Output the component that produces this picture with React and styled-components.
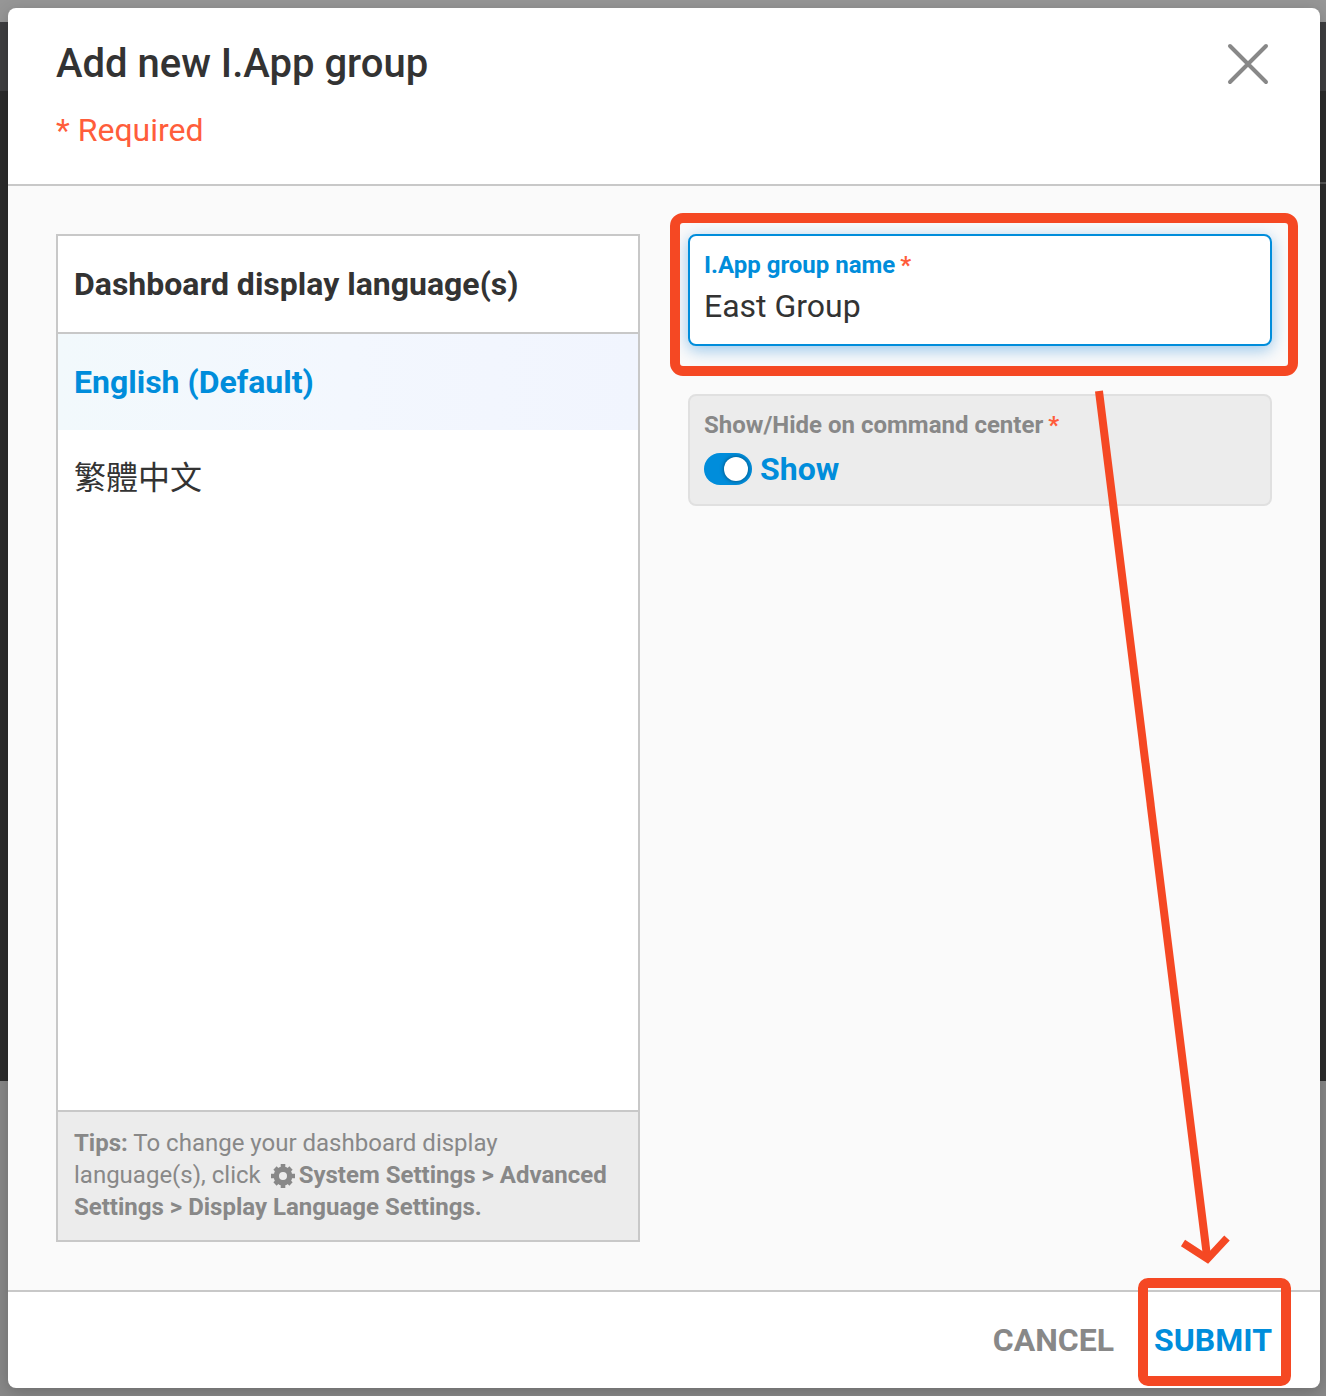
import React, { useState } from 'react'
import styled, { createGlobalStyle } from 'styled-components';

const GlobalStyle = createGlobalStyle`
  * {
    box-sizing: border-box;
  }

  body {
    margin: 0;
    font-family: Roboto, "Noto Sans CJK TC", sans-serif;
    font-size: 32px;
    color: #333;
  }

  button, input {
    font-family: inherit;
    font-size: inherit;
    border: none;
    padding: 0;
    background: none;
    outline: none;
  }
`;

const languages = [
  { id: "en", label: "English (Default)" },
  { id: "zh", label: "繁體中文" },
];

const CloseIcon = () => (
  <svg width="42" height="42" viewBox="0 0 42 42" fill="none" stroke="#888" strokeWidth="4" strokeLinecap="round">
    <path d="M3 3 39 39M39 3 3 39" />
  </svg>
)

const GearIcon = () => (
  <svg width="24" height="24" viewBox="0 0 24 24" fill="none" stroke="#888">
    <circle cx="12" cy="12" r="6.700" strokeWidth="5.400" />
    <path d="M12 0v6M12 18v6M0 12h6M18 12h6M4 4l4 4M16 16l4 4M20 4l-4 4M8 16l-4 4" strokeWidth="4.600" />
  </svg>
)

const App = () => {
  const [language, setLanguage] = useState("en");
  const [name, setName] = useState("East Group");
  const [show, setShow] = useState(true);

  return (
    <Page>
      <GlobalStyle />
      <Modal>
        <Header>
          <div>
            <h1>Add new I.App group</h1>
            <p>* Required</p>
          </div>
          <button type="button" aria-label="Close"><CloseIcon /></button>
        </Header>

        <Body>
          <LanguagePanel>
            <h2>Dashboard display language(s)</h2>
            <LanguageList>
              {
                languages.map((curElem) => {
                  return <LanguageItem key={curElem.id} $active={curElem.id === language} onClick={() => setLanguage(curElem.id)}>{curElem.label}</LanguageItem>
                })
              }
            </LanguageList>
            <Tips>
              <b>Tips:</b> To change your dashboard display language(s), click <GearIcon /><b>System Settings &gt; Advanced Settings &gt; Display Language Settings.</b>
            </Tips>
          </LanguagePanel>

          <Fields>
            <Field $focused>
              <Label $focused>I.App group name <Star>*</Star></Label>
              <input type="text" name="name" value={name} onChange={(e) => setName(e.target.value)} />
              <FieldHighlight />
            </Field>
            <Field>
              <Label>Show/Hide on command center <Star>*</Star></Label>
              <SwitchRow>
                <Switch type="button" role="switch" aria-checked={show} $on={show} onClick={() => setShow(!show)}><span /></Switch>
                {show ? "Show" : "Hide"}
              </SwitchRow>
            </Field>
          </Fields>
        </Body>

        <Footer>
          <FooterButton type="button">CANCEL</FooterButton>
          <FooterButton type="button" $primary>SUBMIT<SubmitHighlight /></FooterButton>
        </Footer>
      </Modal>

      <Arrow viewBox="0 0 1326 1396">
        <path d="M1099 391 1207 1256" />
        <path d="M1183 1243 1207.500 1259 1227 1238" strokeWidth="7.500" />
      </Arrow>
    </Page>
  )
}

const Page = styled.div`
  position: relative;
  width: 1326px;
  height: 1396px;
  padding: 8px 6px 8px 8px;
  overflow: hidden;
  background:
    linear-gradient(#555, #555) right 182px / 6px 2px no-repeat,
    linear-gradient(#969696 0 22px, #3e3e40 22px 91px, #2c2c2c 91px 1081px, #888 1081px);
`;

const Modal = styled.div`
  display: flex;
  flex-direction: column;
  height: 100%;
  border-radius: 8px;
  background-color: #fff;
  box-shadow: 0 4px 16px rgba(0, 0, 0, 0.2);
`;

const Header = styled.header`
  display: flex;
  justify-content: space-between;
  align-items: flex-start;
  height: 178px;
  padding: 32px 51px 0 48px;
  border-bottom: 2px solid #c8c8c8;

  h1 {
    margin: 0;
    font-size: 40px;
    font-weight: 500;
    line-height: 48px;
  }

  p {
    margin: 22px 0 0;
    line-height: 40px;
    color: #ff5d3b;
  }

  button {
    margin-top: 3px;
    cursor: pointer;
  }

  svg {
    display: block;
  }
`;

const Body = styled.main`
  flex: 1;
  display: grid;
  grid-template-columns: 1fr 1fr;
  gap: 48px;
  padding: 48px;
  background-color: #fafafa;
`;

const LanguagePanel = styled.section`
  display: flex;
  flex-direction: column;
  border: 2px solid #c8c8c8;
  background-color: #fff;

  h2 {
    height: 98px;
    margin: 0;
    padding: 0 16px;
    border-bottom: 2px solid #c8c8c8;
    font-size: 32px;
    font-weight: 700;
    line-height: 96px;
  }
`;

const LanguageList = styled.ul`
  flex: 1;
  margin: 0;
  padding: 0;
  list-style: none;
`;

const LanguageItem = styled.li`
  height: 96px;
  padding: 0 16px;
  line-height: 96px;
  cursor: pointer;
  color: ${({ $active }) => $active ? "#008ddb" : "#333"};
  font-weight: ${({ $active }) => $active ? 700 : 400};
  background: ${({ $active }) => $active ? "linear-gradient(90deg, #f2f9fc, #f3f7fe 50%, #f1f5fe)" : "none"};
`;

const Tips = styled.div`
  height: 130px;
  padding: 15px 16px;
  border-top: 2px solid #c8c8c8;
  background-color: #ececec;
  color: #888;
  font-size: 24px;
  line-height: 32px;

  svg {
    margin: 0 4px;
    vertical-align: -5px;
  }
`;

const Fields = styled.section`
  display: flex;
  flex-direction: column;
  gap: 48px;
`;

const Field = styled.div`
  position: relative;
  height: 112px;
  padding: 13px 14px;
  border: 2px solid ${({ $focused }) => $focused ? "#008ddb" : "#e0e0e0"};
  border-radius: 8px;
  background-color: ${({ $focused }) => $focused ? "#fff" : "#ececec"};
  box-shadow: ${({ $focused }) => $focused ? "0 4px 16px rgba(0, 120, 215, 0.4)" : "none"};

  input {
    display: block;
    width: 100%;
    height: 40px;
    margin-top: 5px;
    color: #333;
  }
`;

const Label = styled.div`
  font-size: 24px;
  font-weight: 700;
  line-height: 32px;
  color: ${({ $focused }) => $focused ? "#008ddb" : "#888"};
`;

const Star = styled.span`
  color: #ff5d3b;
  margin-left: -1px;
`;

const SwitchRow = styled.div`
  display: flex;
  align-items: center;
  gap: 8px;
  height: 40px;
  margin-top: 8px;
  font-weight: 700;
  color: #008ddb;
`;

const Switch = styled.button`
  display: flex;
  justify-content: ${({ $on }) => $on ? "flex-end" : "flex-start"};
  width: 48px;
  height: 32px;
  padding: 4px;
  border-radius: 16px;
  background-color: ${({ $on }) => $on ? "#008ddb" : "#aaa"};
  cursor: pointer;

  span {
    width: 24px;
    height: 24px;
    border-radius: 50%;
    background-color: #fff;
    box-shadow: 0 0 4px rgba(0, 0, 0, 0.5);
  }
`;

const Footer = styled.footer`
  display: flex;
  justify-content: flex-end;
  align-items: center;
  gap: 40px;
  height: 98px;
  padding: 0 48px;
  border-top: 2px solid #c8c8c8;
`;

const FooterButton = styled.button`
  position: relative;
  font-weight: 700;
  line-height: 40px;
  color: ${({ $primary }) => $primary ? "#008ddb" : "#888"};
  cursor: pointer;
`;

const Highlight = styled.span`
  position: absolute;
  border: 10px solid #f54823;
  border-radius: 13px;
  pointer-events: none;
`;

const FieldHighlight = styled(Highlight)`
  inset: -23px -28px -32px -20px;
`;

const SubmitHighlight = styled(Highlight)`
  inset: -42px -19px -26px -16px;
  border-radius: 10px;
`;

const Arrow = styled.svg`
  position: absolute;
  inset: 0;
  fill: none;
  stroke: #f54823;
  stroke-width: 8;
  pointer-events: none;
`;

export default App
